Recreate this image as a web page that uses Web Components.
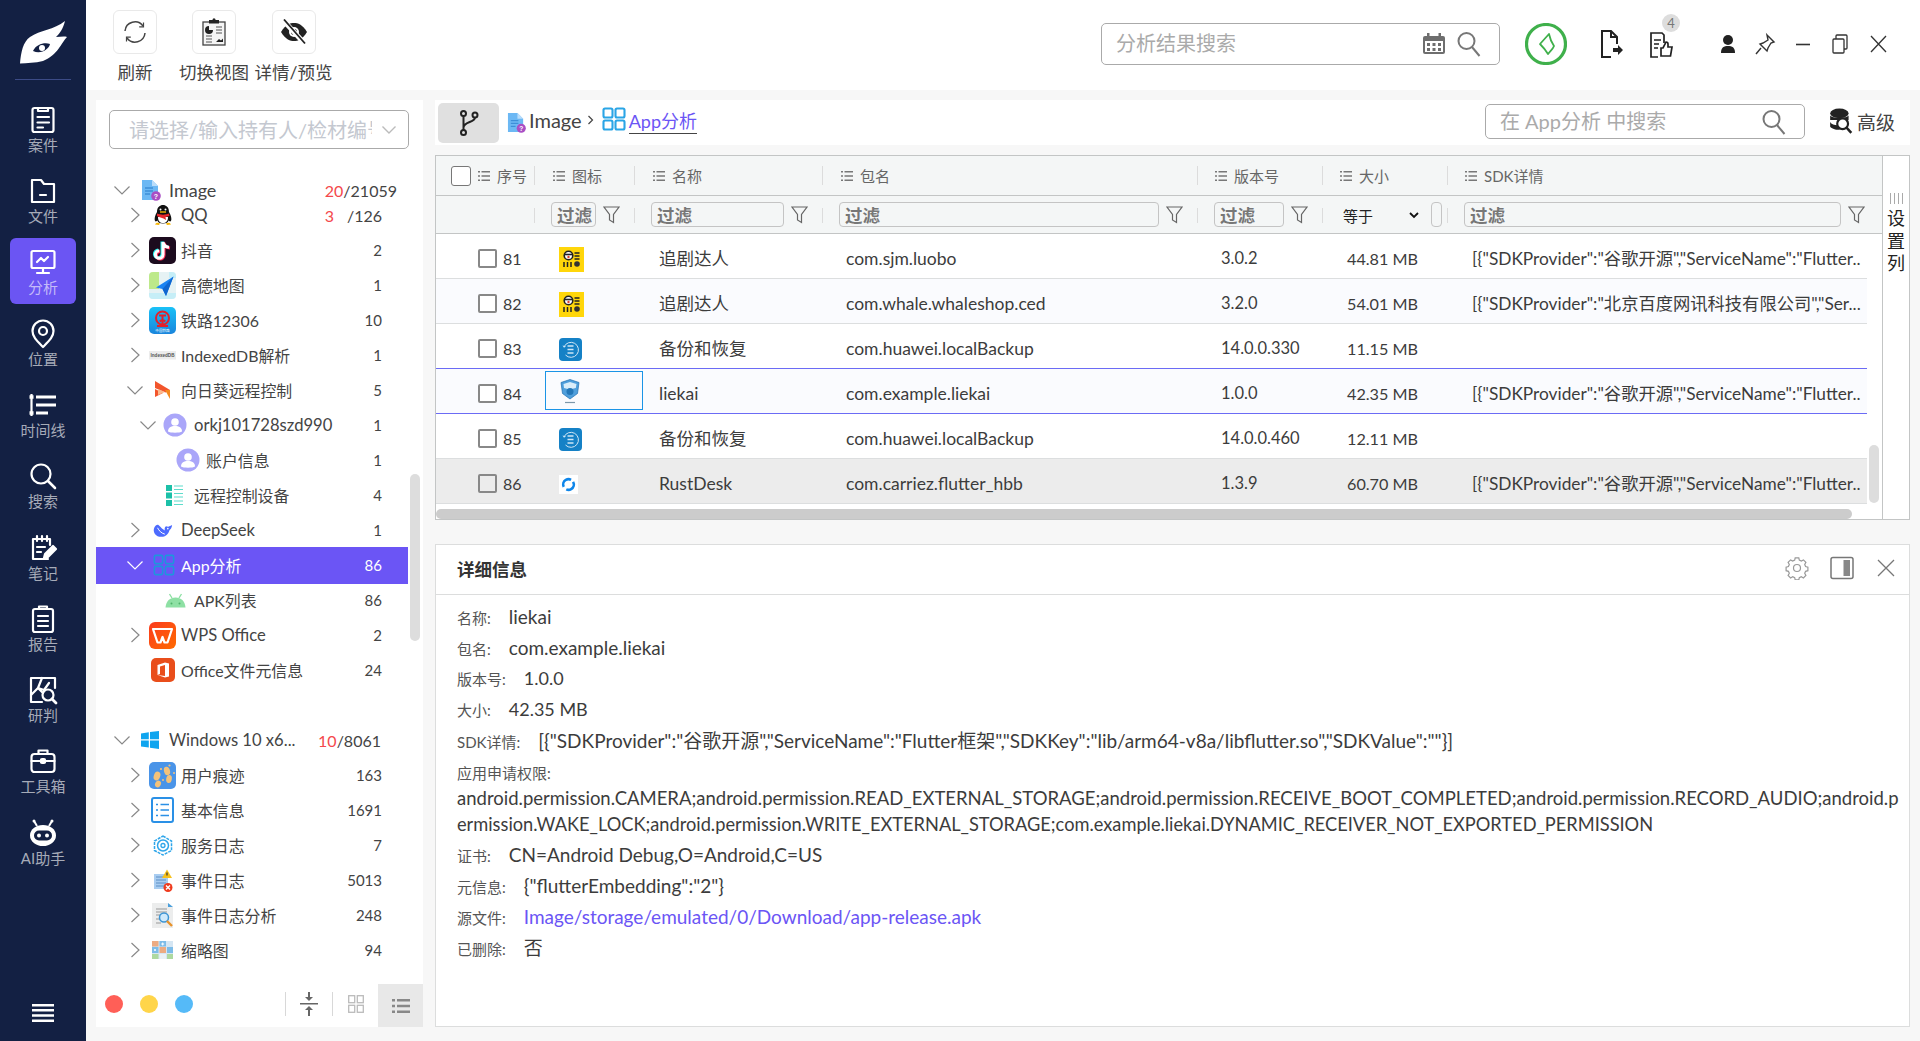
<!DOCTYPE html>
<html lang="zh"><head><meta charset="utf-8"><title>分析</title>
<style>html,body{margin:0;height:100%;overflow:hidden;background:#f7f7f7;font-family:Lato,"Noto Sans CJK SC",sans-serif}</style></head>
<body><app-shell></app-shell>
<script>
const FONT='Lato,"Noto Sans CJK SC",sans-serif';
function def(name,css,html,init){
  customElements.define(name,class extends HTMLElement{
    constructor(){super();this.attachShadow({mode:'open'});}
    connectedCallback(){
      const a=k=>this.getAttribute(k)||'';
      this.shadowRoot.innerHTML='<style>'+css+'</style>'+(typeof html==='function'?html(a,this):html);
      if(init)init(this,a);
    }
  });
}
const nav=(b)=>`<svg slot="icon" width="30" height="30" viewBox="0 0 30 30" fill="none" stroke="#fff" stroke-width="2.2" stroke-linejoin="round" stroke-linecap="round">${b}</svg>`;
const NAV={
 case:nav('<rect x="4.500" y="3" width="21" height="24" rx="2"/><path d="M10 3v3h10V3M9.500 12H21M9.500 17.500H21M9.500 22.500H15"/>'),
 file:nav('<path d="M4 4h9l3 4h10v18H4z"/><path d="M12 19h6"/>'),
 ana:nav('<rect x="3.500" y="4" width="23" height="17" rx="1.500"/><path d="M9 15l4-4 3 3 4-4M15 21v4M9 26h12"/>'),
 loc:nav('<path d="M15 28C9 22 4.500 18 4.500 12a10.500 10.500 0 0 1 21 0C25.500 18 21 22 15 28z"/><circle cx="15" cy="12" r="4"/>'),
 time:nav('<path stroke-width="3" stroke-linecap="butt" d="M8 7h20M8 15h20M8 23h12"/><path stroke-width="2.200" stroke-linecap="butt" d="M3.500 4v22"/><path stroke-width="3.400" stroke-linecap="butt" d="M1.500 7h4M1.500 23h4"/>'),
 find:nav('<circle cx="13" cy="13" r="9.500"/><path stroke-width="2.600" d="M20 20l7 7"/>'),
 note:nav('<path d="M20 26H5V6h17v6"/><path d="M9 3v5M14 3v5M19 3v5M9 14h8M9 19h4"/><path fill="#fff" d="M16 25l1-4 8-8 3 3-8 8z"/>'),
 rep:nav('<rect x="5" y="5" width="20" height="23" rx="2"/><path d="M11 5V2.500h8V5M10 12h10M10 17h10M10 22h10"/>'),
 judge:nav('<path d="M27 13V3H3v24h11"/><path d="M3 20l7-7 5 5M14 3l-4 10 6 2 5-7"/><circle cx="20" cy="20" r="5.500"/><path d="M24 24l4 4" stroke-width="2.800"/>'),
 tool:nav('<rect x="3.500" y="8" width="23" height="18" rx="3"/><path d="M10.500 8V4.500h9V8M3.500 15h23"/><rect x="13" y="13" width="4" height="4" rx="1" fill="#fff"/>'),
 ai:`<svg slot="icon" width="30" height="30" viewBox="0 0 30 30"><ellipse cx="15" cy="17.500" rx="13" ry="10.500" fill="#fff"/><path d="M9 8L6 3M21 8l3-5" stroke="#fff" stroke-width="2"/><circle cx="6" cy="3" r="1.500" fill="#fff"/><circle cx="24" cy="3" r="1.500" fill="#fff"/><rect x="6" y="12.500" width="18" height="10" rx="5" fill="#132043"/><circle cx="11" cy="17.500" r="2" fill="#fff"/><circle cx="19" cy="17.500" r="2" fill="#fff"/></svg>`
};
const ic=(w,h,vb,b)=>`<svg slot="icon" width="${w}" height="${h}" viewBox="${vb}">${b}</svg>`;
const docImg=(w=20,h=22)=>`<svg slot="icon" width="${w}" height="${h}" viewBox="0 0 20 22"><path d="M1 1h10l6 6v14H1z" fill="#6cb8f4"/><path d="M11 1l6 6h-6z" fill="#b9ddfb"/><path d="M4 9h8M4 12h8M4 15h5" stroke="#3d8fd8" stroke-width="1.300"/><circle cx="15" cy="17" r="4.800" fill="#a94fc4"/><text x="15" y="19.600" font-size="7" font-weight="700" text-anchor="middle" fill="#fff" font-family="Liberation Sans">?</text></svg>`;
const gridI=(c,w=27,s='slot="icon"',sw=1.7)=>`<svg ${s} width="${w}" height="${w}" viewBox="0 0 24 24" fill="none" stroke="${c}" stroke-width="${sw}"><rect x="1.500" y="1.500" width="9" height="9" rx="1.500"/><rect x="13.500" y="1.500" width="9" height="9" rx="1.500"/><rect x="1.500" y="13.500" width="9" height="9" rx="1.500"/><rect x="13.500" y="13.500" width="9" height="9" rx="1.500"/></svg>`;
const avatar=ic(24,24,'0 0 24 24','<circle cx="12" cy="12" r="11.500" fill="#aaa6f9"/><circle cx="12" cy="9" r="3.800" fill="#fff"/><path d="M5 18.500c0-4 3-5.500 7-5.500s7 1.500 7 5.500c-2 1.600-12 1.600-14 0z" fill="#fff"/>');
const I={
 qq:ic(22,22,'0 0 22 22','<path d="M5 8c0-5 3-7 6-7s6 2 6 7c2 3 3 7 2 9-1 1-2 0-2.500-.5-.3 2-2 3-5.500 3s-5.200-1-5.500-3C5 17 4 18 3 17c-1-2 0-6 2-9z" fill="#111"/><path d="M6 13c0 4 2 6 5 6s5-2 5-6z" fill="#fff"/><path d="M5 9.500c3 1.500 9 1.500 12 0l.5 2.500-4 1 .5 3-2.500-1.500L7 13l-2-1z" fill="#e8262a"/><path d="M3 20.500c1-2 3-2 5-1l-1 1.500zM19 20.500c-1-2-3-2-5-1l1 1.500z" fill="#f7b500"/><circle cx="8.500" cy="5.500" r="1" fill="#fff"/><circle cx="13.500" cy="5.500" r="1" fill="#fff"/><path d="M8 8h6" stroke="#f7b500" stroke-width="1.400"/>'),
 dy:ic(27,27,'0 0 27 27','<rect width="27" height="27" rx="5" fill="#1c0b1e"/><g fill="none" stroke-width="3"><path stroke="#25f4ee" d="M14 5v12.500a3.800 3.800 0 1 1-3.800-3.800M14 5c.5 3 3 5 6 5.300" transform="translate(-1,-.6)"/><path stroke="#fe2c55" d="M14 5v12.500a3.800 3.800 0 1 1-3.800-3.800M14 5c.5 3 3 5 6 5.300" transform="translate(1,.8)"/><path stroke="#fff" d="M14 5v12.500a3.800 3.800 0 1 1-3.800-3.800M14 5c.5 3 3 5 6 5.300"/></g>'),
 gd:ic(27,27,'0 0 27 27','<rect width="27" height="27" rx="4" fill="#e6f2f4"/><path d="M0 4a4 4 0 0 1 4-4h6v17H0z" fill="#bde98a"/><path d="M20 0h3a4 4 0 0 1 4 4v2h-7zM0 21h27v2a4 4 0 0 1-4 4H4a4 4 0 0 1-4-4z" fill="#c6eef7"/><path d="M24.500 4.500L7 15.500l6.500 1.500 3.500 7z" fill="#1a83f2"/><path d="M24.500 4.500L13.500 17l3.500 7z" fill="#0f66cf"/>'),
 tl:ic(27,27,'0 0 27 27','<defs><linearGradient id="t" x1="0" y1="0" x2="0" y2="1"><stop offset="0" stop-color="#19c1f7"/><stop offset="1" stop-color="#1a85dc"/></linearGradient></defs><rect width="27" height="27" rx="5" fill="url(#t)"/><circle cx="13.500" cy="11" r="6.500" fill="none" stroke="#e3202a" stroke-width="2"/><path d="M8 19h11M13.500 9v10M10 8.500h7M10.800 14.500c1.800-2 3.600-2 5.400 0" stroke="#e3202a" stroke-width="2" fill="none"/><text x="13.500" y="25" font-size="3.600" text-anchor="middle" fill="#fff" font-family="Noto Sans CJK SC">中国铁路</text>'),
 idb:ic(27,27,'0 0 27 27','<rect y="9" width="27" height="8.500" fill="#ececec"/><text x="13.500" y="15.200" font-size="4.600" font-weight="700" text-anchor="middle" fill="#555" font-family="Liberation Sans">IndexedDB</text>'),
 sun:ic(17,18,'0 0 17 18','<path d="M1 0l15 9-4.500 2.500L1 7z" fill="#f2552c"/><path d="M1 16V8l8 4z" fill="#f2552c"/><path d="M11 9l5 0v9z" fill="#f58a1f"/><path d="M4 8l7 3-7 3z" fill="#fbb98c"/>'),
 av:avatar,
 rc:ic(17,21,'0 0 17 21','<path fill="#1cc0a8" d="M0 0h6v6H0zM0 7.500h6v6H0zM0 15h6v6H0z"/><path stroke="#5ddccb" stroke-width="1.100" d="M8 1h9M8 4.500h9M8 8.500h9M8 12h9M8 16h9M8 19.500h9"/>'),
 ds:ic(20,15,'0 0 22 16','<path d="M21 2c-1.500 1-3 1-4 2-1-.5-2-.5-2-.5C13 3 12.500 6 13 8c-2-1-4-3-7-6C4.500 1 2 3 1 6c-1 4 2 9 8 9 5 0 8-3 9-7 1-1 3-3 3-6z" fill="#4d6bfe"/><path d="M5 5c1.500 3 4 6 8 7" stroke="#fff" stroke-width="1.100" fill="none"/><circle cx="16.300" cy="6" r=".9" fill="#fff"/>'),
 an:ic(21,15,'0 0 21 15','<path d="M.5 14.500C1 8 5 4.500 10.500 4.500S20 8 20.500 14.500z" fill="#8ee0a4"/><path d="M4.500 1l2.500 4M16.500 1L14 5" stroke="#8ee0a4" stroke-width="1.400"/><circle cx="6.500" cy="10.500" r="1" fill="#4fb36b"/><circle cx="14.500" cy="10.500" r="1" fill="#4fb36b"/>'),
 wps:ic(27,27,'0 0 27 27','<defs><linearGradient id="w" x1="0" y1="0" x2="1" y2="1"><stop offset="0" stop-color="#fb3b1e"/><stop offset="1" stop-color="#ff6a00"/></linearGradient></defs><rect width="27" height="27" rx="6" fill="url(#w)"/><path d="M4 7h19l-1 3-3.500 10.500h-3L13.500 15l-2 5.500h-3L5 10z" fill="none" stroke="#fff" stroke-width="2.200" stroke-linejoin="round"/>'),
 off:ic(24,24,'0 0 24 24','<rect width="24" height="24" rx="5" fill="#e94e1b"/><path d="M6.500 7l7.500-2.500 4 1v13l-4 1-7.500-2.500 7.500 1V7l-5 1.500V16l-2.500 1z" fill="#fff"/>'),
 win:ic(18,18,'0 0 18 18','<path d="M0 2.500l7.800-1.200v7H0zM9 1.100L18 0v8.300H9zM0 9.500h7.800v7L0 15.400zM9 9.500h9V18l-9-1.300z" fill="#0fa5ef"/>'),
 ft:ic(27,27,'0 0 27 27','<rect width="27" height="27" rx="5" fill="#4a94e8"/><g fill="#f4c27a"><ellipse cx="8" cy="14" rx="3.200" ry="4.500" transform="rotate(20 8 14)"/><ellipse cx="18" cy="9" rx="3" ry="4.300" transform="rotate(-15 18 9)"/><ellipse cx="20" cy="17" rx="2.800" ry="4" transform="rotate(10 20 17)"/><ellipse cx="9" cy="22" rx="2.800" ry="3.500" transform="rotate(30 9 22)"/><circle cx="20.500" cy="3.500" r="1.100"/><circle cx="12" cy="7" r="1.100"/><circle cx="25" cy="11" r="1"/><circle cx="14" cy="18" r="1"/></g>'),
 info:ic(23,26,'0 0 23 26','<rect x="1" y="1" width="21" height="24" rx="2" fill="#fff" stroke="#2a90e6" stroke-width="2"/><path d="M5 7.500h2M5 13h2M5 18.500h2M9.500 7.500h8.500M9.500 13h8.500M9.500 18.500h8.500" stroke="#2a90e6" stroke-width="1.500"/>'),
 svc:ic(20,21,'0 0 20 21','<path d="M10 1l8.500 5v9.500L10 20l-8.500-4.500V6z" fill="none" stroke="#2fa6ea" stroke-width="1.500" stroke-dasharray="3 1"/><circle cx="10" cy="10.500" r="5.500" fill="none" stroke="#2fa6ea" stroke-width="1.500"/><circle cx="10" cy="10.500" r="2" fill="none" stroke="#2fa6ea" stroke-width="1.300"/>'),
 ev:ic(20,23,'0 0 20 23','<rect x="1" y="5" width="14" height="15" fill="#a9cdf1"/><path d="M3 8h10M3 11h10M3 14h10M3 17h10" stroke="#5c8fc5"/><path d="M14 .5l5 8.500h-10z" fill="#f7c11c"/><path d="M14 3.500v3" stroke="#333" stroke-width="1.200"/><circle cx="15" cy="18.500" r="4.500" fill="#ef3a1d"/><path d="M13 16.500l4 4M17 16.500l-4 4" stroke="#fff" stroke-width="1.400"/>'),
 evs:ic(21,27,'0 0 21 27','<path d="M0 1h16l5 4v21H0z" fill="#eceded"/><path d="M16 1l5 4h-5z" fill="#4a9fdc"/><path d="M4 7h11M4 10h11M4 13h9M4 17h5M4 21h5" stroke="#999"/><circle cx="12" cy="15.500" r="4.500" fill="#cfe9fb" stroke="#3b94d4" stroke-width="1.500"/><path d="M15 19l5 5" stroke="#e8922a" stroke-width="2.400"/>'),
 th:ic(21,18,'0 0 21 18','<rect width="21" height="18" fill="#d5e6f3"/><rect x="0" y="0" width="6.500" height="5.500" fill="#ecab82"/><rect x="7.500" y="6" width="6.500" height="6" fill="#ecab82"/><rect x="0" y="6" width="6.500" height="6" fill="#7dbce8"/><rect x="7.500" y="0" width="6.500" height="5.500" fill="#7dbce8"/><rect x="15" y="6" width="6" height="6" fill="#7dbce8"/><rect x="0" y="13" width="6.500" height="5" fill="#add9a0"/><rect x="15" y="13" width="6" height="5" fill="#add9a0"/><rect x="7.500" y="13" width="6.500" height="5" fill="#e9f1f7"/><path d="M10.700 1.500v3M9.200 3h3M3 8v2M2 9h2" stroke="#fff"/>'),
};
const RI={
 yl:`<svg slot="icon" width="25" height="25" viewBox="0 0 25 25"><rect width="25" height="25" fill="#ffd60a"/><circle cx="9.500" cy="8.500" r="4.300" fill="#fff" stroke="#222" stroke-width="1.600"/><path d="M5 7.500h9" stroke="#222" stroke-width="1.600"/><circle cx="9.500" cy="10" r="1.200" fill="#e0402a"/><path d="M5 20v-5M8.500 20v-5M12 20v-5" stroke="#222" stroke-width="1.500"/><path d="M15.500 6h5M15.500 9h5M15.500 12h5" stroke="#222" stroke-width="1.400"/><circle cx="18" cy="17" r="2.800" fill="#333"/></svg>`,
 hw:`<svg slot="icon" width="23" height="23" viewBox="0 0 23 23"><rect width="23" height="23" rx="4" fill="#1581c6"/><path d="M5 9a7.500 7.500 0 1 1 1.500 8" fill="none" stroke="#cfe6f5" stroke-width="1"/><path d="M3.500 7.500l1.500 2.300 2-1.600z" fill="#cfe6f5"/><path d="M8.500 8h6M8.500 11.500h6M8.500 15h6" stroke="#cfe6f5" stroke-width="1.600"/></svg>`,
 sh:`<svg slot="icon" width="22" height="25" viewBox="0 0 22 25"><path d="M2 3.500L11 .5l9 3-1.500 11L11 20l-7.500-5.500z" fill="#4f9fdc" stroke="#1e6fb0" stroke-width=".7"/><path d="M4.500 5L11 3l6.500 2-.7 4-6.300 1.500L5 9z" fill="#d9edfa"/><circle cx="11" cy="12.500" r="3.500" fill="#2477b8"/><path d="M6 23.500h10" stroke="#7c97aa" stroke-width="1.200"/></svg>`,
 rd:`<svg slot="icon" width="19" height="19" viewBox="0 0 19 19"><rect width="19" height="19" fill="#fff"/><circle cx="9.500" cy="9.500" r="5.300" fill="none" stroke="#0e86ea" stroke-width="2.600" stroke-dasharray="13 3.600" transform="rotate(-30 9.500 9.500)"/></svg>`,
};

/* ---- sidebar ---- */
def('nav-item',`:host{display:block;height:71.3px;font:15px ${FONT};color:#a6abb8}
.b{width:66px;height:66px;margin:0 auto;box-sizing:border-box;padding-top:5px;display:flex;flex-direction:column;align-items:center;justify-content:center;border-radius:6px}
:host([active]) .b{background:#6b55f3;color:#c4baf9}
.i{height:28px;display:flex;align-items:center;justify-content:center}.l{height:22px;line-height:22px;margin-top:0;white-space:nowrap}`,
 `<div class="b"><div class="i"><slot name="icon"></slot></div><div class="l"><slot></slot></div></div>`);
def('app-sidebar',`:host{flex:none;width:86px;background:#132043;display:flex;flex-direction:column}
.logo{height:80px;margin:0 15px;border-bottom:1px solid #3c4b86;box-sizing:border-box;display:flex;align-items:center;justify-content:center}
nav{margin-top:15.300px}.menu{margin-top:auto;height:28px;padding-bottom:9px;display:flex;justify-content:center}`,
 `<div class="logo"><svg width="50" height="50" viewBox="0 0 50 50" style="margin-top:6px"><path fill="#fff" d="M2 45.500C3 34 5 24 12 19 22 12 36 12 47 3c-2 8-5 12-9 16 4 0 8-1 11 0-6 6-9 18-24 24-8 2-16 2-23 2.500z"/><path d="M15 33c3-7 12-9 17-7-1 5-9 11-17 7z" fill="#132043"/><circle cx="24" cy="30" r="3" fill="#fff"/></svg></div>
 <nav>
 <nav-item>${NAV.case}案件</nav-item><nav-item>${NAV.file}文件</nav-item><nav-item active>${NAV.ana}分析</nav-item><nav-item>${NAV.loc}位置</nav-item><nav-item>${NAV.time}时间线</nav-item><nav-item>${NAV.find}搜索</nav-item><nav-item>${NAV.note}笔记</nav-item><nav-item>${NAV.rep}报告</nav-item><nav-item>${NAV.judge}研判</nav-item><nav-item>${NAV.tool}工具箱</nav-item><nav-item>${NAV.ai}AI助手</nav-item>
 </nav><div class="menu"><svg width="22" height="18" viewBox="0 0 22 18" fill="#fff"><path d="M0 0h22v2.400H0zM0 5h22v2.400H0zM0 10.300h22v2.400H0zM0 15.600h22V18H0z"/></svg></div>`);

/* ---- top bar ---- */
def('tool-btn',`:host{display:flex;flex-direction:column;align-items:center;font:17.5px ${FONT};color:#444;width:var(--w)}
.box{width:44px;height:44px;box-sizing:border-box;border:1px solid #e9e9e9;border-radius:6px;display:flex;align-items:center;justify-content:center}
.l{margin-top:7px;line-height:24px;white-space:nowrap}`,`<div class="box"><slot name="icon"></slot></div><div class="l"><slot></slot></div>`);
def('search-box',`:host{display:flex;align-items:center;box-sizing:border-box;border:1px solid #aaa;border-radius:5px;background:#fff;font:20px ${FONT};color:#aaa;padding:0 18px 0 14px}
.t{flex:1;white-space:nowrap;margin-top:-3px}::slotted(svg){flex:none}`,`<div class="t"><slot></slot></div><slot name="end"></slot>`);
const mag=(c='#777')=>`<svg slot="end" width="24" height="26" viewBox="0 0 24 26" fill="none" stroke="${c}" stroke-width="2"><circle cx="9.500" cy="10" r="8"/><path d="M15 16l7.500 9"/></svg>`;
def('top-bar',`:host{display:flex;height:90px;background:#fff;flex:none;padding-left:27px;padding-right:30px}
.t{display:flex;padding-top:10px}.t tool-btn:nth-child(1){--w:44px}.t tool-btn:nth-child(2){--w:70px;margin-left:22px}.t tool-btn:nth-child(3){--w:77px;margin-left:6px}
search-box{width:399px;height:42px;margin-left:auto;margin-top:23px}
.r{display:flex;align-items:center;height:87px;margin-left:25px}.r>*{flex:none;display:block}
.badge{position:relative;width:24px;height:24px}
.badge span{position:absolute;left:13px;top:-18px;width:18px;height:18px;border-radius:50%;background:#ddd;font:13px/18px ${FONT};color:#777;text-align:center}`,
`<div class="t"><tool-btn><svg slot="icon" width="26" height="26" viewBox="0 0 26 26" fill="none" stroke="#444" stroke-width="1.500"><path d="M3 12a10 10 0 0 1 18-5"/><path d="M23 14a10 10 0 0 1-18 5"/><path d="M21.500 3.500v4.300h-4.300M4.500 22.500v-4.300h4.300" stroke-width="1.200"/></svg>刷新</tool-btn>
<tool-btn><svg slot="icon" width="24" height="28" viewBox="0 0 24 28"><rect x="1" y="4" width="22" height="23" fill="#f5f5f5" stroke="#444" stroke-width="1.300"/><rect x="7" y="2" width="10" height="3.500" fill="#222"/><circle cx="12" cy="1.800" r="1.500" fill="#222"/><path d="M7 8a4 4 0 1 0 4 4H7z" fill="#222"/><path d="M14 9h6M14 12h6M14 15h6M4 18h6M4 21h6M4 24h6" stroke="#555" stroke-width="1.200"/><path d="M14 24l3-3 2 1.500 2-2V24z" fill="#222"/></svg>切换视图</tool-btn>
<tool-btn><svg slot="icon" width="28" height="26" viewBox="0 0 28 26"><path d="M1 13C6 5 10 4 14 4s8 1 13 9c-5 8-9 9-13 9S6 21 1 13z" fill="#222"/><circle cx="14" cy="13" r="5" fill="#fff"/><circle cx="14" cy="13" r="3" fill="#222"/><path d="M3 1l22 24" stroke="#fff" stroke-width="5"/><path d="M4 0.500l21 24" stroke="#222" stroke-width="1.800"/></svg>详情/预览</tool-btn></div>
<search-box>分析结果搜索<svg slot="end" width="24" height="22" viewBox="0 0 24 22" style="margin-right:11px"><rect x="1" y="3" width="22" height="18" rx="2" fill="#6e6e6e"/><rect x="5" y="0" width="2.500" height="5" fill="#6e6e6e"/><rect x="16.500" y="0" width="2.500" height="5" fill="#6e6e6e"/><rect x="3" y="8" width="18" height="11" fill="#fff"/><path fill="#6e6e6e" d="M5 10h3v3H5zM10.500 10h3v3h-3zM16 10h3v3h-3zM5 15h3v3H5zM10.500 15h3v3h-3zM16 15h3v3h-3z"/></svg>${mag()}</search-box>
<div class="r">
<svg width="42" height="42" viewBox="0 0 42 42" fill="none"><circle cx="21" cy="21" r="19.500" stroke="#3fb04b" stroke-width="3.200"/><path d="M24 11L15 21c2 2 5 5 8 10 2-3 5-5 6-8-2-3-4-7-5-12z" stroke="#3fb04b" stroke-width="1.800" stroke-linejoin="round"/></svg>
<svg style="margin-left:32px" width="24" height="28" viewBox="0 0 24 28" fill="none" stroke="#222" stroke-width="2"><path d="M12 27H3V1h9l6 6v7M12 1v6h6"/><path fill="#222" stroke="none" d="M14 18h5v-3l5 5-5 5v-3h-5z"/></svg>
<div class="badge" style="margin-left:26px"><svg width="24" height="26" viewBox="0 0 24 26" fill="none" stroke="#222" stroke-width="1.700"><path d="M9 25H2V1h11l2 2v8"/><path d="M5 8h7M5 12h5M5 16h4"/><path d="M12 16h2l3-6c1.500 0 2 1 2 2v3h4l-1.500 9H12z"/></svg><span>4</span></div>
<svg style="margin-left:43px" width="24" height="24" viewBox="0 0 24 24"><circle cx="12" cy="8" r="5" fill="#222"/><path d="M5 21c0-6 3-7 7-7s7 1 7 7z" fill="#222"/></svg>
<svg style="margin-left:13px" width="24" height="24" viewBox="0 0 24 24" fill="none" stroke="#333" stroke-width="1.400"><path d="M14 3l7 7-3 1-3 5-1 3-7-7 3-1 5-3z"/><path d="M8 16l-5 6"/></svg>
<svg style="margin-left:14px" width="24" height="24" viewBox="0 0 24 24"><path d="M5 12.500h14" stroke="#333" stroke-width="1.600"/></svg>
<svg style="margin-left:13px" width="24" height="24" viewBox="0 0 24 24" fill="none" stroke="#333" stroke-width="1.300"><rect x="5" y="7" width="11" height="14" rx="1"/><path d="M8 7V4a1 1 0 0 1 1-1h9a1 1 0 0 1 1 1v12a1 1 0 0 1-1 1h-2"/></svg>
<svg style="margin-left:14px" width="24" height="24" viewBox="0 0 24 24" fill="none" stroke="#333" stroke-width="1.300"><path d="M5 4l15 16M20 4L5 20"/></svg>
</div>`);

/* ---- tree ---- */
def('tree-row',`:host{display:flex;align-items:center;height:35px;font:16.6px ${FONT};color:#444;white-space:nowrap;box-sizing:border-box}
:host([selected]){height:37px;margin:-1px 0;background:#6b55f5;color:#fff}
:host([root]){margin-bottom:-10px}
.ar{flex:none;width:16px;height:16px;display:block}.ic{flex:none;display:flex;align-items:center;justify-content:center}
.tx{flex:1;min-width:0;overflow:hidden;text-overflow:ellipsis}.c{flex:none;font-size:15px}
:host([big]) .c{font-size:16px}`,
(a,el)=>{
 const ax=+a('a'),ix=+a('i'),tx=+a('t'),w=+a('w')||27,arrow=a('arrow'),cr=a('cr')||26;
 const col=el.hasAttribute('selected')?'#fff':'#888';
 const ar=arrow==='r'?`<svg class="ar" style="margin-left:${ax-8-96}px" viewBox="0 0 16 16" fill="none" stroke="${col}" stroke-width="1.200"><path d="M4.500 1l7.500 7-7.500 7"/></svg>`:arrow==='d'?`<svg class="ar" style="margin-left:${ax-8-96}px" viewBox="0 0 16 16" fill="none" stroke="${col}" stroke-width="1.200"><path d="M.5 4.500L8 12l7.500-7.500"/></svg>`:'';
 const il=arrow?ix-(ax+8):ix-96;
 return `${ar}<div class="ic" style="width:${w}px;margin-left:${il}px"><slot name="icon"></slot></div><div class="tx" style="margin-left:${tx-ix-w}px"><slot></slot></div><div class="c" style="margin-right:${cr}px"><slot name="count"></slot></div>`;
});
const R=(a,i,t,w,arrow,icon,label,count,ex='')=>{
 const z=label==='Image'?18:/[\u4e00-\u9fff]/.test(label)?15.9:16.6;
 return `<tree-row a="${a}" i="${i}" t="${t}" w="${w}" arrow="${arrow}" ${ex} style="font-size:${z}px">${icon}${label}<span slot="count">${count}</span></tree-row>`;
};
const red=s=>`<span style="color:#f4484c">${s}</span>`;
def('tree-panel',`:host{flex:none;width:327px;background:#fff;display:flex;flex-direction:column;position:relative;font:16px ${FONT}}
.sel{margin:10px 14px 0 13px;height:39px;box-sizing:border-box;border:1px solid #aaa;border-radius:5px;display:flex;align-items:center;padding:0 11px 0 19px;color:#c4c8d0;font-size:20px;overflow:hidden}
.sel span{flex:1;white-space:nowrap;overflow:hidden;margin-right:6px}
.list{width:312px;margin-top:23.500px;flex:1}
.gap{height:35px}
.sb{position:absolute;right:3px;top:374px;width:10px;height:167px;border-radius:5px;background:#ddd}
.foot{height:43px;display:flex;align-items:center;flex:none;padding-left:9px}
.foot>*:not(.act){margin-bottom:3px}
.dot{flex:none;width:18px;height:18px;border-radius:50%;margin-right:17px}
.v{flex:none;width:1px;height:24px;background:#d8d8d8}
.mid{flex:none;width:46px;display:flex;justify-content:center}
.act{flex:none;width:45px;height:43px;background:#e8e8e8;display:flex;align-items:center;justify-content:center;margin-left:auto}`,
`<div class="sel"><span>请选择/输入持有人/检材编号</span><svg width="16" height="10" viewBox="0 0 16 10" fill="none" stroke="#bbb" stroke-width="1.400" style="flex:none;margin-left:3px"><path d="M1.500 1.500L8 8l6.500-6.500"/></svg></div>
<div class="list">
${R(122,141,169,20,'d',docImg(),'Image',`${red('20')}/21059`,'root big cr="11"')}
${R(135,149,181,27,'r',I.qq,'QQ',`${red('3')}<span style="margin-left:13px">/126</span>`,'big')}
${R(135,149,181,27,'r',I.dy,'抖音','2')}
${R(135,149,181,27,'r',I.gd,'高德地图','1')}
${R(135,149,181,27,'r',I.tl,'铁路12306','10')}
${R(135,149,181,27,'r',I.idb,'IndexedDB解析','1')}
${R(135,149,181,27,'d',I.sun,'向日葵远程控制','5')}
${R(148,163,194,24,'d',I.av,'orkj101728szd990','1')}
${R(0,176,206,24,'',I.av,'账户信息','1')}
${R(0,166,194,17,'',I.rc,'远程控制设备','4')}
${R(135,149,181,27,'r',I.ds,'DeepSeek','1')}
${R(135,150,181,27,'d',gridI('#1c97dc',22),'App分析','86','selected')}
${R(0,165,194,21,'',I.an,'APK列表','86')}
${R(135,149,181,27,'r',I.wps,'WPS Office','2')}
${R(0,151,181,24,'',I.off,'Office文件元信息','24')}
<div class="gap"></div>
${R(122,141,169,18,'d',I.win,'Windows 10 x6...',`${red('10')}/8061`,'big cr="27"')}
${R(135,149,181,27,'r',I.ft,'用户痕迹','163')}
${R(135,151,181,23,'r',I.info,'基本信息','1691')}
${R(135,153,181,20,'r',I.svc,'服务日志','7')}
${R(135,153,181,20,'r',I.ev,'事件日志','5013')}
${R(135,152,181,21,'r',I.evs,'事件日志分析','248')}
${R(135,152,181,21,'r',I.th,'缩略图','94')}
</div>
<div class="sb"></div>
<div class="foot"><div class="dot" style="background:#ff5f57"></div><div class="dot" style="background:#ffd54a"></div><div class="dot" style="background:#55baf8"></div>
<div class="v" style="margin-left:75px"></div><div class="mid"><svg width="18" height="24" viewBox="0 0 18 24" fill="#666"><path d="M0 11h18v1.400H0zM8 0h2v5h3l-4 4-4-4h3zM9 14l4 4h-3v6H8v-6H5z"/></svg></div><div class="v"></div>
<div class="mid" style="width:45px"><svg width="16" height="18" viewBox="0 0 16 18" fill="none" stroke="#bbb" stroke-width="1.300"><rect x=".7" y=".7" width="6" height="7"/><rect x="9.300" y=".7" width="6" height="7"/><rect x=".7" y="10.300" width="6" height="7"/><rect x="9.300" y="10.300" width="6" height="7"/></svg></div>
<div class="act"><svg width="18" height="14" viewBox="0 0 18 14" fill="#888"><path d="M0 0h3v2.400H0zM5 0h13v2.400H5zM0 5.800h3v2.400H0zM5 5.800h13v2.400H5zM0 11.600h3V14H0zM5 11.600h13V14H5z"/></svg></div></div>`);

/* ---- breadcrumb ---- */
def('bread-bar',`:host{display:flex;align-items:center;height:45px;flex:none;background:#fff;font:17.5px ${FONT};color:#444;white-space:nowrap}
.btn{width:61px;height:40px;margin-left:3px;background:#e0e0e0;border-radius:5px;display:flex;align-items:center;justify-content:center}
.up{margin-bottom:5px}
.a{color:#6b55f5;border-bottom:1px solid #444;line-height:24px;margin-left:3px;margin-bottom:3px;font-size:18px}
search-box{width:320px;height:35px;margin-left:auto;margin-bottom:2px}
.adv{display:flex;align-items:center;margin-left:24px;margin-right:15px;gap:4px;font-size:19px;margin-bottom:3px}`,
`<div class="btn"><svg width="20" height="26" viewBox="0 0 20 26" fill="none" stroke="#222" stroke-width="2"><circle cx="4.500" cy="3.500" r="2.500"/><circle cx="4.500" cy="22.500" r="2.500"/><circle cx="16" cy="5" r="2.500"/><path d="M4.500 6v14M16 7.500c0 5-11.500 4-11.500 10"/></svg></div>
<span style="margin-left:8px;display:flex">${docImg(19,21).replace('slot="icon"','')}</span><span class="up" style="margin-left:3px;font-size:20px">Image</span>
<svg class="up" width="8" height="12" viewBox="0 0 8 12" fill="none" stroke="#444" stroke-width="1.200" style="margin-left:5px"><path d="M1.500 2l4 4-4 4"/></svg>
${gridI('#2aa5e6',24,'style="margin:-8px 0 0 7px"',2.1)}<span class="a">App分析</span>
<search-box>在 App分析 中搜索${mag()}</search-box>
<div class="adv"><svg width="24" height="26" viewBox="0 0 22 24"><ellipse cx="9.500" cy="5" rx="8.500" ry="4.500" fill="#222"/><path d="M1 7c2 3 15 3 17 0v4H1zM1 13c1 2 4 3 7 3l2 4H8c-3 0-7-2-7-3z" fill="#222"/><circle cx="12.500" cy="14.500" r="5" fill="#fff" stroke="#222" stroke-width="2"/><path d="M16 18l4.500 5" stroke="#222" stroke-width="2.400"/></svg><span>高级</span></div>`);

/* ---- table ---- */
def('col-head',`:host{display:flex;align-items:center;height:100%;font:15px ${FONT};color:#666;box-sizing:border-box;position:relative;white-space:nowrap}
:host::after{content:"";position:absolute;right:0;top:10px;bottom:10px;width:1px;background:#dcdcdc}
:host([last])::after{display:none}
svg{flex:none;margin-right:7px}`,
 `<slot name="pre"></slot><svg width="12" height="10" viewBox="0 0 12 10" fill="#777"><path d="M0 0h2v1.400H0zM3.500 0H12v1.400H3.500zM0 4.300h2v1.400H0zM3.500 4.300H12v1.400H3.500zM0 8.600h2V10H0zM3.500 8.600H12V10H3.500z"/></svg><slot></slot>`);
const fun=`<svg width="17" height="20" viewBox="0 0 17 20" fill="none" stroke="#666" stroke-width="1.200" style="flex:none"><path d="M1 2h15l-5.500 7.500v8l-4-2.500V9.500z"/></svg>`;
def('col-filter',`:host{display:flex;align-items:center;gap:7px;height:100%;box-sizing:border-box;position:relative;padding-left:16px;padding-right:15px}
:host::after{content:"";position:absolute;right:0;top:12px;bottom:10px;width:1px;background:#dcdcdc}
:host([last])::after{display:none}
.f{flex:1;height:25px;box-sizing:border-box;border:1px solid #c4c4c4;border-radius:4px;font:700 17.5px/26px ${FONT};color:#777;padding-left:5px;white-space:nowrap}`,
 `<div class="f">过滤</div>${fun}`);
def('col-blank',`:host{display:block;height:100%;position:relative}:host::after{content:"";position:absolute;right:0;top:12px;bottom:10px;width:1px;background:#dcdcdc}`,'');
def('table-row',`:host{display:grid;grid-template-columns:var(--cols);height:45px;box-sizing:border-box;border-bottom:1px solid #dcdedf;font:17.5px/43px ${FONT};color:#3c3c3c;position:relative;white-space:nowrap;background:#fff}
:host([alt]){background:#fafbfe}
:host([hi]){background:#ececec}
:host([sel]){background:#fafbfe;border-top:1.500px solid #6b6bf5;border-bottom:1.500px solid #6b6bf5;margin-top:-1px;height:46px}
.n{display:flex;align-items:center;padding-left:42px;padding-top:2px;font-size:16px}
.cb{width:19px;height:19px;box-sizing:border-box;border:2px solid #888;border-radius:2px;background:#fff;margin-right:6px;flex:none}
:host([hi]) .cb{background:transparent}
.i{padding-left:24px;padding-top:4px;display:flex;align-items:center;box-sizing:border-box}
:host([sel]) .i{outline:1.500px solid #1a94e6;outline-offset:-2px;margin:1px -9px 1px 9px;padding:1px 0 0 15px;height:41px}
.c{padding-left:24px;padding-top:3px}.s{font-size:17.3px;min-width:0}
.v{font-size:16.5px}.z{font-size:16.2px}`,
 a=>`<div class="n"><div class="cb"></div>${a('n')}</div><div class="i"><slot name="icon"></slot></div><div class="c">${a('name')}</div><div class="c" style="padding-left:23px">${a('pkg')}</div><div class="c v" style="padding-left:23px">${a('ver')}</div><div class="c z">${a('size')}</div><div class="c s">${a('sdk')}</div>`);
const SDK1='[{"SDKProvider":"谷歌开源","ServiceName":"Flutter..';
const SDK2='[{"SDKProvider":"北京百度网讯科技有限公司","Ser...';
const q=s=>s.replace(/"/g,'&quot;');
const TR=(n,ic,name,pkg,ver,size,sdk,ex='')=>`<table-row n="${n}" name="${name}" pkg="${pkg}" ver="${ver}" size="${size}" sdk="${q(sdk)}" ${ex}>${ic}</table-row>`;
def('data-table',`:host{display:flex;height:365px;flex:none;margin-top:10px;border:1px solid #c3c5c5;box-sizing:border-box;background:#fff;position:relative;--cols:99px 100px 188px 375px 125px 125px minmax(0,1fr)}
.m{flex:1;min-width:0;display:flex;flex-direction:column}
.h{display:grid;grid-template-columns:var(--cols);height:40px;background:#f4f6f6;border-bottom:1px solid #c3c5c5}
.fl{display:grid;grid-template-columns:var(--cols);height:38px;background:#f4f6f6;border-bottom:1.500px solid #c3c5c5}
.rows{margin-right:15px;flex:none}
.hs{height:10px;background:#ccc;border-radius:5px;margin-top:5px;margin-right:30px}
.side{flex:none;width:26px;border-left:1px solid #c3c5c5;display:flex;flex-direction:column;align-items:center;font:18px/22.500px ${FONT};color:#222;padding-top:37px}
.side svg{margin-bottom:3px}.side span{display:block;width:18px;word-break:break-all;white-space:normal;text-align:center}
.vs{position:absolute;left:1433px;top:289px;width:10px;height:58px;background:#ddd;border-radius:5px}
.eq{display:flex;align-items:center;padding:2px 0 0 20px;position:relative;font:15px ${FONT};color:#222;height:100%;box-sizing:border-box}
.eq::after{content:"";position:absolute;right:0;top:12px;bottom:10px;width:1px;background:#dcdcdc}
.eq i{flex:none;width:11px;height:25px;box-sizing:border-box;border:1px solid #c4c4c4;border-radius:4px;margin:-2px 0 0 12px}`,
`<div class="m"><div class="h">
<col-head style="padding-left:15px"><span slot="pre" style="width:20px;height:20px;box-sizing:border-box;border:1px solid #777;border-radius:3px;background:#fff;margin-right:7px;flex:none;display:block"></span>序号</col-head>
<col-head style="padding-left:18px">图标</col-head><col-head style="padding-left:18px">名称</col-head><col-head style="padding-left:18px">包名</col-head><col-head style="padding-left:17px">版本号</col-head><col-head style="padding-left:17px">大小</col-head><col-head last style="padding-left:17px">SDK详情</col-head></div>
<div class="fl"><col-blank></col-blank><col-filter></col-filter><col-filter></col-filter><col-filter></col-filter><col-filter></col-filter>
<div class="eq"><span style="width:66px">等于</span><svg width="10" height="7" viewBox="0 0 10 7" fill="none" stroke="#111" stroke-width="1.800"><path d="M1 1l4 4 4-4"/></svg><i></i></div>
<col-filter last style="padding-right:17px"></col-filter></div>
<div class="rows">
${TR(81,RI.yl,'追剧达人','com.sjm.luobo','3.0.2','44.81 MB',SDK1)}
${TR(82,RI.yl,'追剧达人','com.whale.whaleshop.ced','3.2.0','54.01 MB',SDK2,'alt')}
${TR(83,RI.hw,'备份和恢复','com.huawei.localBackup','14.0.0.330','11.15 MB','')}
${TR(84,RI.sh,'liekai','com.example.liekai','1.0.0','42.35 MB',SDK1,'sel')}
${TR(85,RI.hw,'备份和恢复','com.huawei.localBackup','14.0.0.460','12.11 MB','')}
${TR(86,RI.rd,'RustDesk','com.carriez.flutter_hbb','1.3.9','60.70 MB',SDK1,'hi')}
</div><div class="hs"></div></div>
<div class="vs"></div>
<div class="side"><svg width="13" height="11" viewBox="0 0 13 11" fill="#aaa"><path d="M0 0h1v11H0zM4 0h1v11H4zM8 0h1v11H8zM12 0h1v11h-1z"/></svg><span>设置列</span></div>`);

/* ---- detail ---- */
def('info-row',`:host{display:flex;align-items:baseline;height:31px;font:19px/31px ${FONT};color:#3c3c3c;white-space:nowrap}
.l{font-size:15px;color:#555;flex:none;margin-right:18px}`,
 a=>`<span class="l">${a('l')}:</span><slot></slot>`);
def('detail-panel',`:host{display:flex;flex-direction:column;flex:1;min-height:0;margin-top:24px;background:#fff;border:1px solid #dcdddd;box-sizing:border-box}
.h{height:46px;padding-bottom:3px;flex:none;border-bottom:1px solid #dcdddd;display:flex;align-items:center;padding-left:21px;font:700 17.5px ${FONT};color:#333}
.h span{flex:1}.h svg{flex:none}
.b{padding:6px 0 0 21px}
.perm{font:18.5px/26px ${FONT};color:#3c3c3c;white-space:nowrap;margin-top:-2px}
.perm span{font-size:18.23px}
.pl{font:15px/28px ${FONT};color:#555;padding-top:3px}`,
`<div class="h"><span>详细信息</span>
<svg width="24" height="24" viewBox="0 0 24 24" fill="none" stroke="#999" stroke-width="1.200"><path d="M10.200 1.800h3.600l.5 2.300 2 .9 2.100-1.100 2.500 2.500-1.200 2.100.9 2 2.300.6v3.600l-2.300.6-.9 2 1.200 2.100-2.500 2.500-2.100-1.200-2 .9-.5 2.300h-3.600l-.5-2.300-2-.9-2.100 1.200-2.500-2.500 1.200-2.100-.9-2-2.300-.6v-3.600l2.300-.6.900-2-1.200-2.100 2.500-2.500 2.100 1.100 2-.9z"/><circle cx="12" cy="12" r="3.500"/></svg>
<svg style="margin-left:21px" width="24" height="24" viewBox="0 0 24 24" fill="none" stroke="#777" stroke-width="1.500"><rect x="1" y="1.500" width="22" height="21" rx="2"/><rect x="13.500" y="4" width="6.500" height="16" fill="#888" stroke="none"/></svg>
<svg style="margin:0 12px 0 21px" width="22" height="22" viewBox="0 0 22 22" fill="none" stroke="#777" stroke-width="1.300"><path d="M3 3l16 16M19 3L3 19"/></svg></div>
<div class="b">
<info-row l="名称">liekai</info-row>
<info-row l="包名">com.example.liekai</info-row>
<info-row l="版本号"><span style="font-size:18px">1.0.0</span></info-row>
<info-row l="大小"><span style="font-size:18px">42.35 MB</span></info-row>
<info-row l="SDK详情">[{"SDKProvider":"谷歌开源","ServiceName":"Flutter框架","SDKKey":"lib/arm64-v8a/libflutter.so","SDKValue":""}]</info-row>
<div class="pl">应用申请权限:</div>
<div class="perm">android.permission.CAMERA;android.permission.READ_EXTERNAL_STORAGE;android.permission.RECEIVE_BOOT_COMPLETED;android.permission.RECORD_AUDIO;android.p<br><span>ermission.WAKE_LOCK;android.permission.WRITE_EXTERNAL_STORAGE;com.example.liekai.DYNAMIC_RECEIVER_NOT_EXPORTED_PERMISSION</span></div>
<info-row l="证书" style="margin-top:1.500px">CN=Android Debug,O=Android,C=US</info-row>
<info-row l="元信息">{"flutterEmbedding":"2"}</info-row>
<info-row l="源文件"><span style="color:#6b55f5">Image/storage/emulated/0/Download/app-release.apk</span></info-row>
<info-row l="已删除">否</info-row>
</div>`);

def('main-pane',`:host{flex:1;min-width:0;display:flex;flex-direction:column}`,`<bread-bar></bread-bar><data-table></data-table><detail-panel></detail-panel>`);
def('app-shell',`:host{display:flex;width:1920px;height:1041px;overflow:hidden;background:#f7f7f7}
.r{flex:1;min-width:0;display:flex;flex-direction:column}
.c{flex:1;min-height:0;display:flex;gap:12px;padding:10px 10px 14px}`,
`<app-sidebar></app-sidebar><div class="r"><top-bar></top-bar><div class="c"><tree-panel></tree-panel><main-pane></main-pane></div></div>`);
</script></body></html>
